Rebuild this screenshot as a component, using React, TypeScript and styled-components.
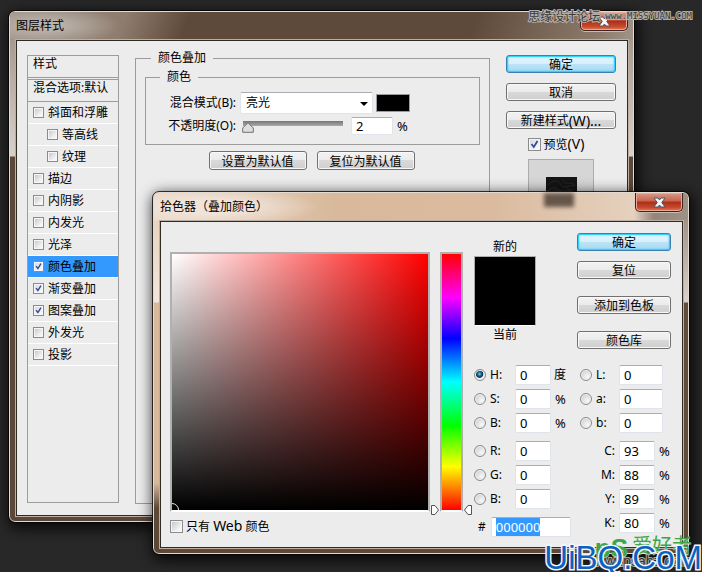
import React, { useEffect, useRef, useState } from "react";
import styled, { createGlobalStyle, css } from "styled-components";

const GlobalStyle = createGlobalStyle`
  * { box-sizing: border-box; }
  html, body { margin: 0; height: 100%; background: #282828; }
  body, button, input, select {
    font-family: "Noto Sans", "Noto Sans CJK SC", sans-serif;
    font-size: 12px;
    line-height: 16px;
    color: #000;
  }
`;

const Desktop = styled.main`
  position: relative;
  min-height: 572px;
  overflow: hidden;
  background: #282828;
`;

const Window = styled.section<{ $front?: boolean }>`
  position: absolute;
  top: ${(p) => (p.$front ? 192 : 11)}px;
  left: ${(p) => (p.$front ? 153 : 9)}px;
  right: ${(p) => (p.$front ? 13 : 68)}px;
  padding: 0 5px 5px 6px;
  border: 1px solid #e3dad1;
  border-radius: 6px;
  outline: 1px solid rgba(0, 0, 0, 0.75);
  box-shadow: 2px 4px 14px 3px rgba(0, 0, 0, 0.75);
  background: linear-gradient(180deg, #998a7c 0, #b6aaa0 60px, #d8d1ca 144px, #5b4838 145px);
  ${(p) =>
    p.$front &&
    css`
      background:
        linear-gradient(#5e4937, #5e4937) bottom / 100% 7px no-repeat,
        linear-gradient(180deg, #8f7d70 0, #d9d2cb 109px, #624b39 110px) right / 8px 100% no-repeat,
        linear-gradient(180deg, #e6cdb6 0, #f2e6da 109px, #d8b89b 110px, #d8b89b 290px, #5e4937 315px);
    `}
`;

const TitleBar = styled.header<{ $front?: boolean }>`
  display: flex;
  justify-content: space-between;
  align-items: flex-start;
  height: 28px;
  margin: 0 -5px 0 -6px;
  padding: 0 5px 0 6px;
  border-radius: 5px 5px 0 0;
  background: ${(p) =>
    p.$front
      ? `radial-gradient(ellipse 110px 20px at 55px 14px, #f0e4da 30%, transparent 100%),
         linear-gradient(90deg, #ead8c8 0, #d8b99b 180px, #dabb9f 340px, #e5d1be 480px, #93857a 500px, #9e9186)`
      : `radial-gradient(ellipse 75px 20px at 35px 14px, #bbb2aa 20%, transparent 100%),
         linear-gradient(110deg, #9d9186 0, #8e7c6e 110px, #5e4a3a 170px, #5e4a3a 440px, #8c7b6c 560px, #a09489)`};
`;

const Title = styled.h1`
  margin: 6px 0 0;
  font-size: 12px;
  line-height: 16px;
  font-weight: 400;
`;

const GlassShade = styled.span`
  width: 30px;
  height: 14px;
  margin-left: auto;
  margin-right: 61px;
  background: #66564a;
  filter: blur(2px);
`;

const CloseButton = styled.button`
  display: grid;
  place-items: center;
  width: 48px;
  height: 19px;
  padding: 0;
  border: 1px solid #3e2320;
  border-top: 0;
  border-radius: 0 0 5px 5px;
  box-shadow: inset 0 0 0 1px #e6a898, 0 1px 0 #c9bbb0;
  background: linear-gradient(#d99a8b 0, #c8624b 45%, #a92f19 50%, #c8482a 80%, #df7b59);
`;

const Client = styled.div<{ $front?: boolean }>`
  display: flex;
  gap: ${(p) => (p.$front ? 10 : 16)}px;
  padding: ${(p) => (p.$front ? "30px 11px 10px 9px" : "14px 11px 11px 10px")};
  border: 1px solid #302a25;
  outline: 1px solid #bcaea2;
  background: #ececec;
`;

const StyleList = styled.ul`
  width: 92px;
  height: 448px;
  margin: 0;
  padding: 0;
  list-style: none;
  border: 1px solid #9c9c9c;
  line-height: 16px;
`;

const StyleHeading = styled.li<{ $first?: boolean }>`
  height: ${(p) => (p.$first ? 24 : 22)}px;
  padding: 0 5px;
  border-bottom: ${(p) => (p.$first ? "3px double" : "1px solid")} #9c9c9c;
  white-space: nowrap;
`;

const StyleRow = styled.li<{ $nested?: boolean; $selected?: boolean }>`
  display: flex;
  align-items: center;
  height: 22px;
  padding-left: ${(p) => (p.$nested ? 19 : 5)}px;
  border-bottom: 1px solid #fff;
  background: ${(p) => (p.$selected ? "#3399ff" : "transparent")};
`;

const CheckLabel = styled.label<{ $gap?: number }>`
  display: flex;
  align-items: center;
  gap: ${(p) => p.$gap ?? 4}px;
  white-space: nowrap;
`;

const Latin = styled.span`
  font-size: 14px;
`;

const tick = `url("data:image/svg+xml,%3Csvg xmlns='http://www.w3.org/2000/svg' viewBox='0 0 11 11'%3E%3Cpath d='M2.5 5 4.8 8 8.5 2' fill='none' stroke='%23354f92' stroke-width='1.8'/%3E%3C/svg%3E")`;

const Checkbox = styled.input.attrs({ type: "checkbox" })<{ $large?: boolean }>`
  appearance: none;
  flex: none;
  width: ${(p) => (p.$large ? 13 : 11)}px;
  height: ${(p) => (p.$large ? 13 : 11)}px;
  margin: 0;
  border: 1px solid #8b8b8b;
  box-shadow: inset 0 0 0 1px #f6f6f6;
  background: linear-gradient(135deg, #bfc4ca, #f5f5f5 75%);
  &:checked { background: ${tick} center / 100% no-repeat, linear-gradient(135deg, #d4d8df, #fff); }
`;

const Group = styled.fieldset<{ $outer?: boolean }>`
  flex: 1;
  min-width: 0;
  margin: 0;
  border: 1px solid #9c9c9c;
  padding: ${(p) => (p.$outer ? "3px 9px 0" : "0 0 8px 21px")};
  ${(p) => (p.$outer ? "margin-top: -5px; height: 454px;" : "height: 76px;")}
`;

const Legend = styled.legend<{ $outer?: boolean }>`
  margin-left: ${(p) => (p.$outer ? 6 : -7)}px;
  padding: 0 7px;
  line-height: 16px;
`;

const BlendRow = styled.div<{ $tall?: boolean }>`
  display: flex;
  align-items: center;
  height: ${(p) => (p.$tall ? 24 : 22)}px;
  margin-top: ${(p) => (p.$tall ? 6 : 0)}px;
`;

const FieldLabel = styled.label`
  width: 73px;
  padding-right: 4px;
  text-align: right;
  white-space: nowrap;
`;

const SelectWrap = styled.span`
  position: relative;
  display: block;
  width: 133px;
`;

const BlendSelect = styled.select`
  appearance: none;
  width: 100%;
  height: 22px;
  padding: 0 5px;
  border: 1px solid #dfe3ea;
  border-top-color: #abadb3;
  border-radius: 2px;
  background: #fff;
`;

const SelectArrow = styled.svg`
  position: absolute;
  right: 5px;
  top: 10px;
  pointer-events: none;
`;

const ColorSwatch = styled.button`
  width: 34px;
  height: 18px;
  margin-left: 3px;
  border: 1px solid #9c9c9c;
  background: #000;
`;

const thumb = `url("data:image/svg+xml,%3Csvg xmlns='http://www.w3.org/2000/svg' viewBox='0 0 12 11'%3E%3Cpath d='M6 .7 11.3 6v4.3H.7V6Z' fill='%23dedede' stroke='%23707070'/%3E%3C/svg%3E")`;

const Slider = styled.input.attrs({ type: "range" })`
  appearance: none;
  width: 103px;
  height: 14px;
  margin: 0 8px 0 0;
  border-radius: 2px;
  background: linear-gradient(#777, #aaa) 3px 2px / 100px 5px no-repeat;
  &::-webkit-slider-thumb {
    appearance: none;
    width: 12px;
    height: 11px;
    margin-top: 3px;
    background: ${thumb} center / 100% 100% no-repeat;
  }
`;

const TextField = styled.input.attrs({ type: "text" })<{ $w: number; $short?: boolean }>`
  width: ${(p) => p.$w}px;
  height: ${(p) => (p.$short ? 18 : 20)}px;
  padding: 0 4px;
  border: 1px solid #dfe3ea;
  border-top-color: #abadb3;
  border-radius: 2px;
  background: #fff;
  font-size: 13px;
`;

const Unit = styled.span<{ $cjk?: boolean }>`
  width: 12px;
  margin-left: ${(p) => (p.$cjk ? 3 : 4)}px;
  font-size: ${(p) => (p.$cjk ? 12 : 13)}px;
`;

const ButtonRow = styled.div`
  display: flex;
  justify-content: center;
  gap: 10px;
  margin: 6px 2px 0 0;
`;

const PushButton = styled.button<{ $primary?: boolean; $w?: number }>`
  display: flex;
  justify-content: center;
  align-items: center;
  width: ${(p) => (p.$w ? `${p.$w}px` : "100%")};
  height: ${(p) => (p.$w ? 19 : 18)}px;
  padding: 2px 0 0;
  border: 1px solid ${(p) => (p.$primary ? "#3c7fb1" : "#707070")};
  border-radius: 3px;
  white-space: nowrap;
  box-shadow: ${(p) => (p.$primary ? "inset 0 0 0 1px #35d0fb, inset 0 0 2px 1px #35d0fb" : "inset 0 0 0 1px #f8f8f8")};
  background: ${(p) =>
    p.$primary
      ? "linear-gradient(#e5f4fc 0, #d8effc 48%, #bde3f8 50%, #a9d9f2)"
      : "linear-gradient(#f2f2f2 0, #ebebeb 48%, #d9d9d9 50%, #cfcfcf)"};
`;

const Actions = styled.div`
  display: flex;
  flex-direction: column;
  align-items: center;
  gap: 10px;
  width: 110px;
`;

const PreviewCheck = styled.div`
  margin: -3px 10px -4px 0;
`;

const PreviewPane = styled.div`
  display: grid;
  place-items: center;
  width: 66px;
  height: 66px;
  border: 1px solid #acacac;
  background: #d6d6d6;
`;

const PickerColumn = styled.div`
  flex: 1;
  min-width: 0;
`;

const colorWell = css`
  height: 260px;
  border: 2px solid #b0b0b0;
  border-bottom-color: #fff;
`;

const ColorField = styled.div`
  ${colorWell}
  display: flex;
  align-items: flex-end;
  background:
    linear-gradient(transparent, #000) padding-box,
    linear-gradient(90deg, #fff, #f00) padding-box;
`;

const WebCheck = styled.div`
  margin-top: 6px;
`;

const HueStrip = styled.div`
  ${colorWell}
  position: relative;
  width: 23px;
  background: linear-gradient(#f00, #f0f 17%, #00f 33%, #0ff 50%, #0f0 67%, #ff0 83%, #f00) padding-box;
`;

const HueMarker = styled.svg<{ $side: "left" | "right" }>`
  position: absolute;
  bottom: -5px;
  ${(p) => p.$side}: -11px;
`;

const ValuesPane = styled.div`
  width: 197px;
  margin: -19px 0 0 1px;
`;

const PaneTop = styled.div`
  display: flex;
  justify-content: space-between;
  height: 132px;
`;

const Comparison = styled.div`
  display: flex;
  flex-direction: column;
  align-items: center;
  width: 62px;
  margin-top: 6px;
  gap: 1px;
`;

const ComparisonColor = styled.div`
  width: 62px;
  height: 70px;
  border: 1px solid #acacac;
  border-bottom-color: #fff;
  background: #000;
`;

const PickerActions = styled.div`
  display: flex;
  flex-direction: column;
  gap: 17px;
  width: 94px;
  & > :first-child { margin-bottom: -7px; }
`;

const ValueGrid = styled.div`
  display: flex;
  justify-content: space-between;
`;

const ValueColumn = styled.div`
  display: flex;
  flex-direction: column;
  gap: 4px;
`;

const ValueRow = styled.div<{ $spaced?: boolean }>`
  display: flex;
  align-items: center;
  height: 20px;
  margin-top: ${(p) => (p.$spaced ? 4 : 0)}px;
`;

const ModelLabel = styled.label`
  display: flex;
  align-items: center;
  gap: 4px;
  width: 41px;
  white-space: nowrap;
`;

const LabLabel = styled(ModelLabel)`
  width: 39px;
`;

const InkLabel = styled.label`
  width: 35px;
  margin-right: 4px;
  text-align: right;
`;

const Radio = styled.input.attrs({ type: "radio", name: "model" })`
  appearance: none;
  width: 12px;
  height: 12px;
  flex: none;
  margin: 0;
  border: 1px solid #8b8b8b;
  border-radius: 50%;
  box-shadow: inset 0 0 0 1px #f4f4f4;
  background: radial-gradient(circle at 65% 65%, #f8f8f8, #c0c4c8);
  &:checked { background: radial-gradient(circle at 45% 40%, #7fd3ef 0, #17618a 25%, #0b3350 42%, #e8eef2 52%); }
`;

const HexRow = styled.div`
  display: flex;
  align-items: center;
  gap: 5px;
  height: 20px;
  margin-top: 4px;
  padding-left: 4px;
`;

const HexValue = styled(TextField)`
  outline: none;
  &::selection { color: #fff; background: #3399ff; }
`;

const ForumMark = styled.div`
  position: absolute;
  top: 7px;
  right: 10px;
  display: flex;
  align-items: center;
  gap: 5px;
  color: #3b3836;
  font: 12px/18px "Noto Sans CJK SC", sans-serif;
  -webkit-text-stroke: 2px #b5b0ab;
  paint-order: stroke fill;
`;

const ForumUrl = styled.span`
  font: 9px/14px "DejaVu Sans Mono", monospace;
`;

const SiteMark = styled.div`
  position: absolute;
  right: 0;
  bottom: 0;
  color: #0b62c4;
  font: 33px/28px "Liberation Sans", sans-serif;
  -webkit-text-stroke: 3px #f4f8fc;
  paint-order: stroke fill;
`;

const FanMark = styled.div`
  position: absolute;
  right: 10px;
  bottom: 11px;
  display: flex;
  align-items: flex-start;
  gap: 4px;
  color: #3fa44a;
  font: 20px/20px "Noto Sans CJK SC", sans-serif;
  text-shadow: 0 1px 1px #e3f2e0;
`;

const FanInitials = styled.span`
  font: bold 26px/26px "Liberation Sans", sans-serif;
`;

const FanUrl = styled.div`
  position: absolute;
  right: 11px;
  bottom: 3px;
  color: #333;
  font: 14px/16px "Liberation Sans", sans-serif;
  -webkit-text-stroke: 2px #a8a8a8;
  paint-order: stroke fill;
`;

function CloseX() {
  return (
    <svg width="13" height="11" viewBox="0 0 13 11" aria-hidden="true">
      <path d="M1 1h4l1.5 2L8 1h4L8.8 5.5 12 10H8L6.5 8 5 10H1l3.2-4.5Z" fill="#f5f5f5" stroke="#535666" />
    </svg>
  );
}

const effects = [
  { name: "斜面和浮雕" },
  { name: "等高线", nested: true },
  { name: "纹理", nested: true },
  { name: "描边" },
  { name: "内阴影" },
  { name: "内发光" },
  { name: "光泽" },
  { name: "颜色叠加", checked: true, selected: true },
  { name: "渐变叠加", checked: true },
  { name: "图案叠加", checked: true },
  { name: "外发光" },
  { name: "投影" },
];

const leftModels = [
  { id: "hue", label: "H:", unit: "度" },
  { id: "sat", label: "S:", unit: "%" },
  { id: "bri", label: "B:", unit: "%" },
  { id: "red", label: "R:", spaced: true },
  { id: "green", label: "G:" },
  { id: "blue", label: "B:" },
];

const labModels = ["L:", "a:", "b:"];
const inks = [
  { label: "C:", value: "93" },
  { label: "M:", value: "88" },
  { label: "Y:", value: "89" },
  { label: "K:", value: "80" },
];

function LayerStyleWindow() {
  const [opacity, setOpacity] = useState("2");
  return (
    <Window aria-label="图层样式">
      <TitleBar>
        <Title>图层样式</Title>
        <CloseButton aria-label="关闭"><CloseX /></CloseButton>
      </TitleBar>
      <Client>
        <StyleList>
          <StyleHeading $first>样式</StyleHeading>
          <StyleHeading>混合选项:默认</StyleHeading>
          {effects.map((e) => (
            <StyleRow key={e.name} $nested={e.nested} $selected={e.selected}>
              <CheckLabel>
                <Checkbox defaultChecked={e.checked} />
                {e.name}
              </CheckLabel>
            </StyleRow>
          ))}
        </StyleList>
        <Group $outer>
          <Legend $outer>颜色叠加</Legend>
          <Group>
            <Legend>颜色</Legend>
            <BlendRow $tall>
              <FieldLabel htmlFor="blend">混合模式(B):</FieldLabel>
              <SelectWrap>
                <BlendSelect id="blend"><option>亮光</option></BlendSelect>
                <SelectArrow width="8" height="4" viewBox="0 0 8 4" aria-hidden="true"><path d="M0 0h8L4 4Z" /></SelectArrow>
              </SelectWrap>
              <ColorSwatch aria-label="叠加颜色" />
            </BlendRow>
            <BlendRow>
              <FieldLabel htmlFor="opacity">不透明度(O):</FieldLabel>
              <Slider aria-label="不透明度" min="0" max="100" value={Number(opacity) || 0} onChange={(e) => setOpacity(e.target.value)} />
              <TextField id="opacity" $w={42} $short value={opacity} onChange={(e) => setOpacity(e.target.value)} />
              <Unit>%</Unit>
            </BlendRow>
          </Group>
          <ButtonRow>
            <PushButton $w={98}>设置为默认值</PushButton>
            <PushButton $w={98}>复位为默认值</PushButton>
          </ButtonRow>
        </Group>
        <Actions>
          <PushButton $primary>确定</PushButton>
          <PushButton>取消</PushButton>
          <PushButton>新建样式<Latin>(W)...</Latin></PushButton>
          <PreviewCheck>
            <CheckLabel $gap={3}><Checkbox $large defaultChecked /><span>预览<Latin>(V)</Latin></span></CheckLabel>
          </PreviewCheck>
          <PreviewPane>
            <svg width="31" height="31" viewBox="0 0 31 31" aria-hidden="true">
              <path d="M0 0h31v31H0Z" fill="#141414" />
              <path d="M2 8c5-6 11-5 13 0s9-1 14 1M1 14c7-6 12-3 14 1M17 3c2 6 8 1 12 5M4 12c3-2 6-1 8 2M20 10l7 5" fill="none" stroke="#262626" />
            </svg>
          </PreviewPane>
        </Actions>
      </Client>
    </Window>
  );
}

function ColorPickerWindow() {
  const hexField = useRef<HTMLInputElement>(null);
  useEffect(() => {
    hexField.current?.focus();
    hexField.current?.select();
  }, []);
  return (
    <Window $front aria-label="拾色器">
      <TitleBar $front>
        <Title>拾色器（叠加颜色）</Title>
        <GlassShade />
        <CloseButton aria-label="关闭"><CloseX /></CloseButton>
      </TitleBar>
      <Client $front>
        <PickerColumn>
          <ColorField>
            <svg width="8" height="8" viewBox="0 0 8 8" aria-hidden="true"><circle cx="0" cy="8" r="6.5" fill="none" stroke="#e8e8e8" /></svg>
          </ColorField>
          <WebCheck>
            <CheckLabel $gap={3}><Checkbox $large /><span>只有 <Latin>Web</Latin> 颜色</span></CheckLabel>
          </WebCheck>
        </PickerColumn>
        <HueStrip>
          <HueMarker $side="left" width="8" height="10" viewBox="0 0 8 10" aria-hidden="true"><path d="M.5.5H4L7.5 5 4 9.5H.5Z" fill="#fff" stroke="#555" /></HueMarker>
          <HueMarker $side="right" width="8" height="10" viewBox="0 0 8 10" aria-hidden="true"><path d="M7.5.5H4L.5 5 4 9.5h3.5Z" fill="#fff" stroke="#555" /></HueMarker>
        </HueStrip>
        <ValuesPane>
          <PaneTop>
            <Comparison>
              <span>新的</span>
              <ComparisonColor />
              <span>当前</span>
            </Comparison>
            <PickerActions>
              <PushButton $primary>确定</PushButton>
              <PushButton>复位</PushButton>
              <PushButton>添加到色板</PushButton>
              <PushButton>颜色库</PushButton>
            </PickerActions>
          </PaneTop>
          <ValueGrid>
            <ValueColumn>
              {leftModels.map((m, i) => (
                <ValueRow key={m.id} $spaced={m.spaced}>
                  <ModelLabel><Radio defaultChecked={i === 0} />{m.label}</ModelLabel>
                  <TextField $w={36} aria-label={m.label} defaultValue="0" />
                  {m.unit && <Unit $cjk={m.unit !== "%"}>{m.unit}</Unit>}
                </ValueRow>
              ))}
              <HexRow>
                <label htmlFor="hex">#</label>
                <HexValue ref={hexField} id="hex" $w={80} defaultValue="000000" />
              </HexRow>
            </ValueColumn>
            <ValueColumn>
              {labModels.map((label) => (
                <ValueRow key={label}>
                  <LabLabel><Radio />{label}</LabLabel>
                  <TextField $w={44} aria-label={label} defaultValue="0" />
                </ValueRow>
              ))}
              {inks.map((ink, i) => (
                <ValueRow key={ink.label} $spaced={i === 0}>
                  <InkLabel htmlFor={`ink-${i}`}>{ink.label}</InkLabel>
                  <TextField id={`ink-${i}`} $w={36} defaultValue={ink.value} />
                  <Unit>%</Unit>
                </ValueRow>
              ))}
            </ValueColumn>
          </ValueGrid>
        </ValuesPane>
      </Client>
    </Window>
  );
}

export default function App() {
  return (
    <>
      <GlobalStyle />
      <Desktop>
        <LayerStyleWindow />
        <ColorPickerWindow />
        <ForumMark>思缘设计论坛<ForumUrl>www.MISSYUAN.COM</ForumUrl></ForumMark>
        <FanMark><FanInitials>pS</FanInitials>爱好者</FanMark>
        <FanUrl>www.psahz.com</FanUrl>
        <SiteMark>UiBQ.CoM</SiteMark>
      </Desktop>
    </>
  );
}
